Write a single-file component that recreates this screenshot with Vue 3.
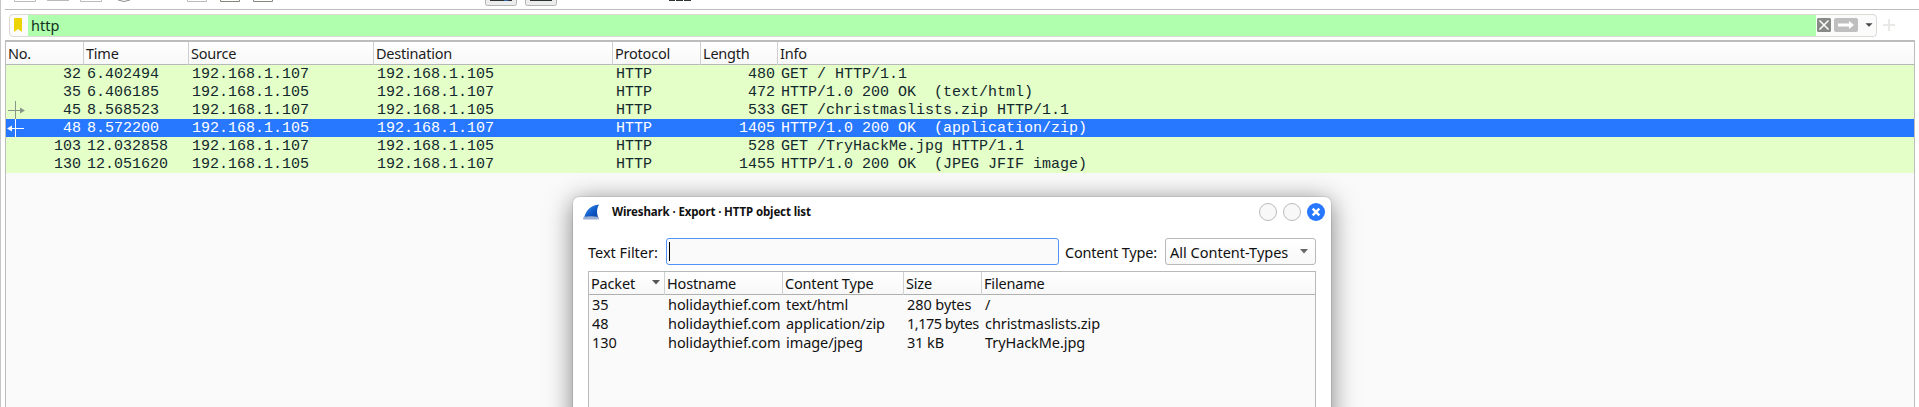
<script setup>
const packets = [
  ['32', '6.402494', '192.168.1.107', '192.168.1.105', 'HTTP', '480', 'GET / HTTP/1.1'],
  ['35', '6.406185', '192.168.1.105', '192.168.1.107', 'HTTP', '472', 'HTTP/1.0 200 OK  (text/html)'],
  ['45', '8.568523', '192.168.1.107', '192.168.1.105', 'HTTP', '533', 'GET /christmaslists.zip HTTP/1.1'],
  ['48', '8.572200', '192.168.1.105', '192.168.1.107', 'HTTP', '1405', 'HTTP/1.0 200 OK  (application/zip)'],
  ['103', '12.032858', '192.168.1.107', '192.168.1.105', 'HTTP', '528', 'GET /TryHackMe.jpg HTTP/1.1'],
  ['130', '12.051620', '192.168.1.105', '192.168.1.107', 'HTTP', '1455', 'HTTP/1.0 200 OK  (JPEG JFIF image)'],
]
const heads = ['No.', 'Time', 'Source', 'Destination', 'Protocol', 'Length', 'Info']
const objects = [
  ['35', 'holidaythief.com', 'text/html', '280 bytes', '/'],
  ['48', 'holidaythief.com', 'application/zip', '1,175 bytes', 'christmaslists.zip'],
  ['130', 'holidaythief.com', 'image/jpeg', '31 kB', 'TryHackMe.jpg'],
]
const objHeads = ['Packet', 'Hostname', 'Content Type', 'Size', 'Filename']
</script>

<template>
  <div class="window">
    <svg class="toolbar" width="1919" height="9" viewBox="0 0 1919 9">
      <g fill="none" stroke="#bcbcba">
        <path d="M14.5 0V1.5H35.5V0M80.5 0V1.5H101.5V0M187.5 0V1.5H206.5V0" />
        <path d="M47 .5H69" />
        <path d="M118 0Q124 3 130 0" stroke="#8e8e8e" />
        <path d="M220.5 0V1.5H239.5V0M253.5 0V1.5H272.5V0" stroke="#85877c" />
      </g>
      <g fill="#ececec" stroke="#b4b4b4">
        <path d="M485.5 0V3.5Q485.5 5.5 487.5 5.5H514.5Q516.5 5.5 516.5 3.5V0M525.5 0V3.5Q525.5 5.5 527.5 5.5H554.5Q556.5 5.5 556.5 3.5V0" />
      </g>
      <path d="M490 0H512V1H490zM530 0H552V1H530zM669 0H675V1H669zM676 0H683V1H676zM684 0H691V1H684z" fill="#2e3436" />
      <path d="M504 0H508V1H504z" fill="#3465a4" />
    </svg>
    <div class="filter-row">
      <div class="filter">
        <div class="bookmark">
          <svg width="8" height="14" viewBox="0 0 8 14"><path d="M0 1Q0 0 1 0H7Q8 0 8 1V14L4 11L0 14Z" fill="#edd400" /></svg>
        </div>
        <div class="expression">http</div>
        <svg class="actions" width="60" height="20" viewBox="0 0 60 20">
          <rect x="1" y="3" width="14" height="14" rx="1.5" fill="#888a85" />
          <path d="M3.5 5.5L12.5 14.5M12.5 5.5L3.5 14.5" stroke="#fff" stroke-width="1.5" />
          <rect x="18" y="3" width="24" height="14" rx="2" fill="#bfbfbf" />
          <path d="M22 8.5H33V6L38 10L33 14V11.5H22Z" fill="#fff" />
          <path d="M50 8.5H56L53 11.5Z" fill="#444" stroke="#444" stroke-width=".5" />
        </svg>
      </div>
      <svg class="plus" width="12" height="12" viewBox="0 0 12 12"><path d="M6 0V12M0 6H12" stroke="#e9e9e7" stroke-width="2" /></svg>
    </div>
    <div class="packet-list">
      <div class="row head">
        <span v-for="h in heads" :key="h">{{ h }}</span>
      </div>
      <div v-for="p in packets" :key="p[0]" class="row packet" :class="{ selected: p[0] === '48' }">
        <span v-for="(c, i) in p" :key="i">{{ c }}</span>
        <svg v-if="p[0] === '45'" class="mark" width="22" height="18" viewBox="0 0 22 18">
          <path d="M9.5 0V18M2 9.5H15" stroke="#87968a" /><path d="M14 6.5L19 9.5L14 12.5Z" fill="#87968a" />
        </svg>
        <svg v-if="p[0] === '48'" class="mark" width="22" height="18" viewBox="0 0 22 18">
          <path d="M9.5 0V18M5 9.5H18" stroke="#fff" /><path d="M6 6.5L1 9.5L6 12.5Z" fill="#fff" />
        </svg>
      </div>
    </div>
    <section class="dialog">
      <header class="titlebar">
        <svg class="fin" width="17" height="16" viewBox="0 0 17 16">
          <defs><linearGradient id="fin" x1="0" y1="0" x2="1" y2="1"><stop offset="0" stop-color="#3f9cf5" /><stop offset=".6" stop-color="#0b55c4" /><stop offset="1" stop-color="#0b3f9e" /></linearGradient></defs>
          <path d="M1 14C3 6 8 1 16 .5C13.500 5 13.500 9 15.500 14Z" fill="url(#fin)" />
          <path d="M.5 13Q8 11.500 15.500 13L16 15.500H0Z" fill="#9aaed2" />
        </svg>
        <h1>Wireshark · Export · HTTP object list</h1>
        <i class="dot"></i><i class="dot"></i>
        <svg width="18" height="18" viewBox="0 0 18 18"><circle cx="9" cy="9" r="9" fill="#2777ff" /><path d="M5.7 5.7L12.3 12.3M12.3 5.7L5.7 12.3" stroke="#fff" stroke-width="2.4" /></svg>
      </header>
      <div class="form">
        <label>Text Filter:</label>
        <div class="input"><i></i></div>
        <label class="type">Content Type:</label>
        <div class="select"><span>All Content-Types</span><svg width="8" height="5" viewBox="0 0 8 5"><path d="M0 0H8L4 4.500Z" fill="#666" /></svg></div>
      </div>
      <div class="objects">
        <div class="obj obj-head">
          <span v-for="(h, i) in objHeads" :key="h">{{ h }}<svg v-if="i === 0" width="8" height="5" viewBox="0 0 8 5"><path d="M0 0H8L4 4.500Z" fill="#555" /></svg></span>
        </div>
        <div v-for="o in objects" :key="o[0]" class="obj">
          <span v-for="(c, i) in o" :key="i" :class="{ tight: c.length === 11 }">{{ c }}</span>
        </div>
      </div>
    </section>
  </div>
</template>

<style>
html, body { margin: 0; overflow: hidden; }
</style>
<style scoped>
* { box-sizing: border-box; }
.window { position: relative; width: 1919px; height: 407px; overflow: hidden; display: flex; flex-direction: column; border-left: 1px solid #c6c6c6; background: #fff; font: 14.5px/20px "Noto Sans", sans-serif; color: #1c1c1c; }
.toolbar { display: block; flex: none; margin-left: -1px; }
.filter-row { height: 31px; margin-left: 4px; border-top: 1px solid #bdbdbd; display: flex; padding: 4px 0 0 4px; flex: none; }
.filter { width: 1868px; height: 23px; border: 1px solid #dcdad5; border-radius: 4px; display: flex; background: #fbfbfb; overflow: hidden; }
.bookmark { width: 18px; padding: 3px 0 0 4px; line-height: 0; }
.expression { flex: 1; background: #afffaf; padding-left: 3px; line-height: 20px; color: #14301c; }
.actions { flex: none; }
.plus { margin: 5px 0 0 6px; }
.packet-list { flex: 1; margin-left: 4px; width: 1910px; border: 1px solid #bdbdbd; border-top: 2px solid #bdbdbd; border-bottom: 0; background: #fafafa; }
.row { display: grid; grid-template-columns: 78px 105px 185px 239px 88px 77px 1fr; position: relative; }
.head { height: 23px; background: linear-gradient(#fff, #f8f8f8); border-bottom: 1px solid #b8b8b8; letter-spacing: -.22px; }
.head span { border-left: 1px solid #d0d0d0; padding-left: 2px; line-height: 23px; margin-left: -1px; }
.head span:first-child { border-left: 0; padding-left: 3px; }
.packet { height: 18px; background: #e4ffc7; color: #12272e; font: 15px/19px "Liberation Mono", monospace; white-space: pre; }
.packet span { padding-left: 3px; height: 18px; }
.packet span:nth-child(1), .packet span:nth-child(6) { text-align: right; padding: 0 3px 0 0; }
.selected { background: #2777ff; color: #fff; }
.mark { position: absolute; left: 0; top: 0; }
.dialog { position: absolute; left: 572px; top: 197px; width: 758px; height: 240px; background: #fff; border-radius: 6px 6px 0 0; box-shadow: 0 0 0 1px rgba(0,0,0,.08), 0 4px 26px rgba(0,0,0,.5); padding: 0 15px; color: #111; }
.titlebar { height: 41px; display: flex; align-items: flex-start; padding-top: 6px; margin: 0 -9px 0 -5px; }
.fin { margin-top: 1px; }
h1 { margin: 0 auto 0 12px; font-size: 11.5px; line-height: 18px; font-weight: 700; letter-spacing: -.13px; }
.dot { width: 18px; height: 18px; border: 1px solid #bcbcbc; border-radius: 50%; background: #f8f8f8; margin-right: 6px; }
.form { height: 27px; display: flex; align-items: center; white-space: nowrap; }
.form label { width: 78px; }
.input { width: 393px; height: 27px; border: 1.5px solid #5294f4; border-radius: 3px; background: #fafafa; padding: 3px 2px; }
.input i { display: block; width: 1px; height: 19px; background: #000; }
.form .type { width: 100px; margin-left: 6px; letter-spacing: -.2px; }
.select { width: 151px; height: 27px; border: 1px solid #b9b9b9; border-radius: 3px; display: flex; align-items: center; justify-content: space-between; padding: 0 7px 0 4px; background: linear-gradient(#fff, #f8f8f8); }
.objects { margin-top: 6px; width: 728px; height: 190px; border: 1px solid #b9b9b9; background: #fafafa; }
.obj { display: grid; grid-template-columns: 76px 118px 121px 78px 1fr; height: 19px; white-space: nowrap; line-height: 19px; letter-spacing: -.08px; }
.obj span { padding-left: 3px; }
.obj .tight { letter-spacing: -.5px; }
.obj-head { height: 23px; line-height: 23px; background: linear-gradient(#fff, #f8f8f8); border-bottom: 1px solid #b0b0b0; letter-spacing: -.18px; }
.obj-head span { padding-left: 2px; border-right: 1px solid #d0d0d0; display: flex; justify-content: space-between; }
.obj-head span:last-child { border: 0; }
.obj-head svg { margin: 8px 4px 0 0; }
</style>
